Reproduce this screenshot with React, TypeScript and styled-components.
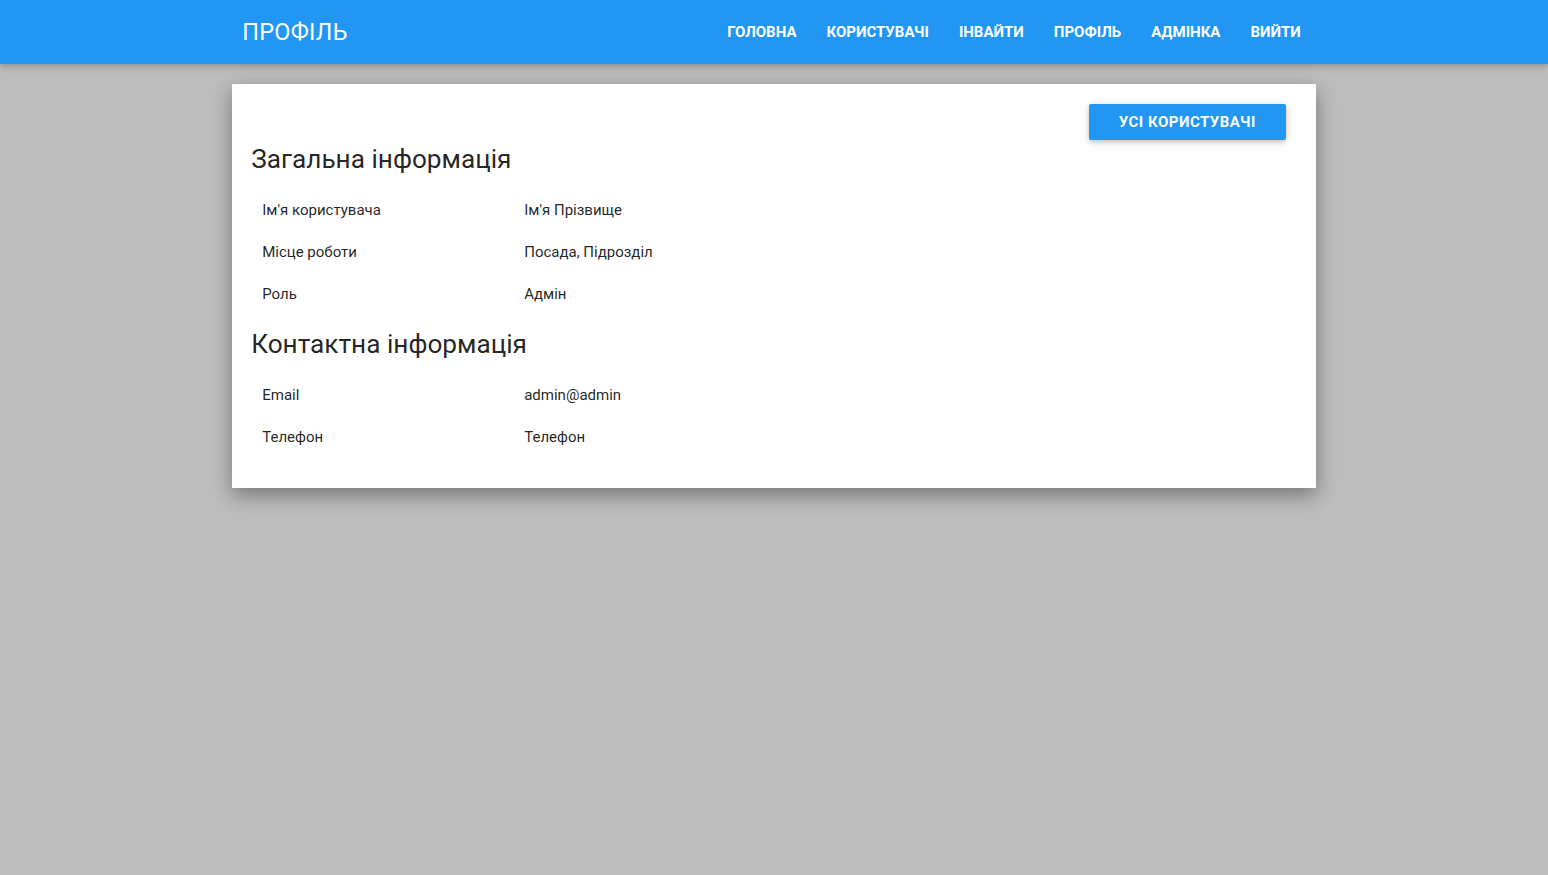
import React from "react";
import styled, { createGlobalStyle } from "styled-components";

const Global = createGlobalStyle`
  html, body { margin: 0; padding: 0; }
  body {
    background: #bdbdbd;
    font-family: Roboto, "Noto Sans", sans-serif;
    font-size: 15px;
    color: rgba(0,0,0,0.87);
    min-height: 875px;
  }
`;

const Nav = styled.nav`
  height: 64px;
  background: #2196f3;
  box-shadow: 0 2px 5px 0 rgba(0,0,0,.16), 0 2px 10px 0 rgba(0,0,0,.12);
`;

const NavInner = styled.div`
  width: 70%;
  margin: 0 auto;
  height: 100%;
  display: flex;
  align-items: center;
  justify-content: space-between;
`;

const Brand = styled.a`
  color: #fff;
  font-size: 23.4px;
  padding-left: 10px;
  text-decoration: none;
  letter-spacing: 0.3px;
`;

const Links = styled.ul`
  display: flex;
  list-style: none;
  margin: 0;
  padding: 0;
`;

const LinkItem = styled.li`
  a {
    display: block;
    padding: 0 15px;
    color: #fff;
    font-weight: 700;
    font-size: 15px;
    line-height: 64px;
    text-decoration: none;
    text-transform: uppercase;
  }
`;

const Card = styled.section`
  width: 70%;
  margin: 20px auto 0;
  background: #fff;
  padding: 20px 30px 30px 20px;
  box-sizing: border-box;
  box-shadow: 0 8px 17px 0 rgba(0,0,0,.2), 0 6px 20px 0 rgba(0,0,0,.19);
`;

const TopBar = styled.div`
  display: flex;
  justify-content: flex-end;
`;

const Button = styled.button`
  height: 36px;
  width: 197px;
  border: none;
  border-radius: 2px;
  background: #2196f3;
  color: #fff;
  font-family: Roboto, sans-serif;
  font-weight: 700;
  font-size: 15px;
  letter-spacing: 0.5px;
  text-transform: uppercase;
  box-shadow: 0 2px 5px 0 rgba(0,0,0,.16), 0 2px 10px 0 rgba(0,0,0,.12);
  cursor: pointer;
`;

const Heading = styled.h5<{ $gap: number }>`
  margin: ${(p) => p.$gap}px 0 15px -1px;
  font-size: 26.2px;
  font-weight: 400;
  line-height: 30px;
  color: rgba(0,0,0,0.87);
`;

const Rows = styled.div`
  display: grid;
  grid-template-columns: 272px 1fr;
`;

const Cell = styled.div`
  height: 42px;
  line-height: 42px;
  padding-left: 10px;
  font-size: 15px;
`;

const ValueCell = styled(Cell)`
  padding-left: 0;
`;

const general = [
  ["Ім'я користувача", "Ім'я Прізвище"],
  ["Місце роботи", "Посада, Підрозділ"],
  ["Роль", "Адмін"],
];

const contacts = [
  ["Email", "admin@admin"],
  ["Телефон", "Телефон"],
];

const links = ["Головна", "Користувачі", "Інвайти", "Профіль", "Адмінка", "Вийти"];

function InfoRows({ data }: { data: string[][] }) {
  return (
    <Rows>
      {data.map(([k, v]) => (
        <React.Fragment key={k}>
          <Cell>{k}</Cell>
          <ValueCell>{v}</ValueCell>
        </React.Fragment>
      ))}
    </Rows>
  );
}

export default function App() {
  return (
    <>
      <Global />
      <Nav>
        <NavInner>
          <Brand href="#">ПРОФІЛЬ</Brand>
          <Links>
            {links.map((l) => (
              <LinkItem key={l}>
                <a href="#">{l}</a>
              </LinkItem>
            ))}
          </Links>
        </NavInner>
      </Nav>
      <Card>
        <TopBar>
          <Button>Усі користувачі</Button>
        </TopBar>
        <Heading $gap={4}>Загальна інформація</Heading>
        <InfoRows data={general} />
        <Heading $gap={14}>Контактна інформація</Heading>
        <InfoRows data={contacts} />
      </Card>
    </>
  );
}
